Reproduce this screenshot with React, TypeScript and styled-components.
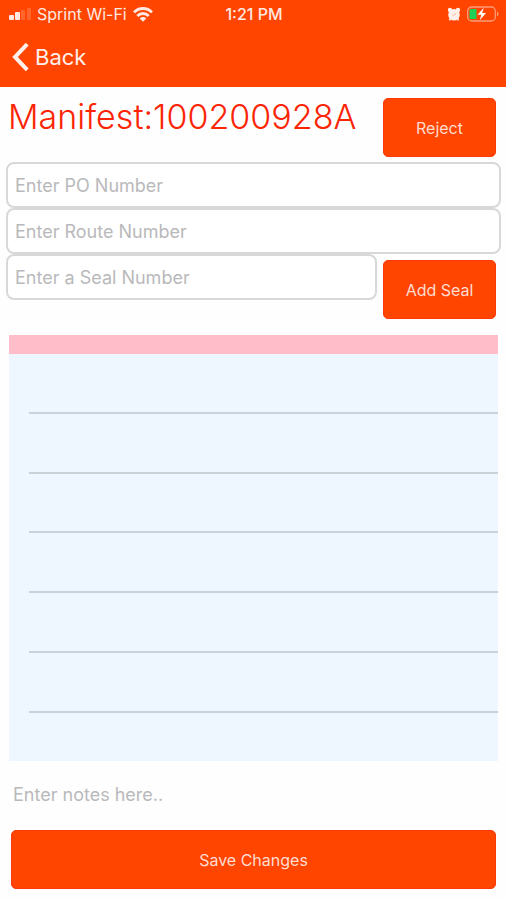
import React from "react";
import styled, { createGlobalStyle } from "styled-components";

const GlobalStyle = createGlobalStyle`
  *, *::before, *::after { box-sizing: border-box; }
  body {
    margin: 0;
    background: #fefefe;
    font-family: Inter, "Liberation Sans", sans-serif;
  }
`;

const Screen = styled.div`
  display: flex;
  flex-direction: column;
  min-height: 100vh;
`;

const Header = styled.header`
  background: #ff4500;
  color: #ffe9e2;
  padding-bottom: 9px;
`;

const StatusBar = styled.div`
  display: grid;
  grid-template-columns: 1fr auto 1fr;
  align-items: center;
  height: 28px;
  padding: 0 7px 0 9px;
  font-size: 16px;
  line-height: 28px;
`;

const StatusGroup = styled.div<{ $end?: boolean }>`
  display: flex;
  align-items: center;
  justify-content: ${(p) => (p.$end ? "flex-end" : "flex-start")};
  gap: 6px;
`;

const Time = styled.time`
  font-size: 16px;
  font-weight: 500;
`;

const BackButton = styled.button`
  display: flex;
  align-items: center;
  gap: 6px;
  height: 50px;
  padding: 8px 12px 0;
  border: 0;
  background: none;
  color: #fff0eb;
  font: 400 22px Inter, "Liberation Sans", sans-serif;
  cursor: pointer;
`;

const Main = styled.main`
  display: flex;
  flex: 1;
  flex-direction: column;
  padding-bottom: 11px;
`;

const TitleRow = styled.div`
  display: flex;
  justify-content: space-between;
  align-items: flex-start;
  gap: 6px;
  padding: 11px 10px 5px 8px;
`;

const Title = styled.h1`
  margin: 0;
  color: #fb2506;
  font-size: 34px;
  font-weight: 300;
  line-height: 38px;
`;

const ActionButton = styled.button<{ $wide?: boolean }>`
  flex: none;
  width: ${(p) => (p.$wide ? "auto" : "113px")};
  height: 59px;
  margin: ${(p) => (p.$wide ? "0 10px 0 11px" : "0")};
  padding: 0;
  border: 1px solid #fb3a08;
  border-radius: 5px;
  background: #ff4500;
  color: #ffdccf;
  font: 400 16px Inter, "Liberation Sans", sans-serif;
  cursor: pointer;
`;

const Fields = styled.div`
  display: flex;
  flex-direction: column;
  padding: 0 5px 0 6px;
`;

const TextField = styled.input`
  flex: 1 0 auto;
  min-width: 0;
  height: 46px;
  padding: 0 7px;
  border: 2px solid #d8d8d8;
  border-radius: 8px;
  background: #fff;
  color: #222;
  font: 400 18px Inter, "Liberation Sans", sans-serif;

  &::placeholder {
    color: #b9b9bb;
    opacity: 1;
  }
`;

const SealRow = styled.div`
  display: flex;
  align-items: flex-start;
  gap: 6px;
  padding: 0 10px 16px 6px;

  ${TextField} {
    flex: 1 1 0;
  }

  ${ActionButton} {
    margin-top: 6px;
  }
`;

const SealList = styled.section`
  display: flex;
  flex: 1;
  flex-direction: column;
  margin: 0 8px 0 9px;
  background: #eef6ff;
`;

const ListHeader = styled.div`
  height: 19px;
  background: #ffbdca;
`;

const Rows = styled.ul`
  display: flex;
  flex: 1;
  flex-direction: column;
  margin: 0;
  padding: 0 0 0 20px;
  list-style: none;
`;

const Row = styled.li`
  flex: 6 0 0;
  border-bottom: 2px solid #c9d2d6;

  &:last-child {
    flex-grow: 5;
    border-bottom: 0;
  }
`;

const Notes = styled.textarea`
  display: block;
  height: 69px;
  padding: 22px 13px;
  border: 0;
  background: transparent;
  color: #222;
  font: 400 18px/24px Inter, "Liberation Sans", sans-serif;
  resize: none;

  &::placeholder {
    color: #b9b9bb;
    opacity: 1;
  }
`;

const SignalIcon = () => (
  <svg width="22" height="12" viewBox="0 0 22 12" fill="#ffe9e2" aria-hidden="true">
    <rect x="0" y="7" width="5" height="5" rx="1" />
    <rect x="6" y="4" width="5" height="8" rx="1" />
    <rect x="12" y="2" width="4" height="10" rx="1" opacity="0.2" />
    <rect x="18" y="0" width="4" height="12" rx="1" opacity="0.2" />
  </svg>
);

const WifiIcon = () => (
  <svg width="20" height="15" viewBox="0 0 20 15" fill="none" stroke="#ffe9e2" strokeWidth="2.8" aria-hidden="true">
    <path d="M1 5.4C6 .2 14 .2 19 5.4" />
    <path d="M4.3 8.9c3.2-3.2 8.200-3.200 11.400 0" />
    <path d="M10 14.800 6.700 11.500c1.900-1.900 4.700-1.900 6.600 0z" fill="#ffe9e2" stroke="none" />
  </svg>
);

const AlarmIcon = () => (
  <svg width="14" height="15" viewBox="0 0 14 15" aria-hidden="true">
    <g fill="#fff0ea">
      <circle cx="3" cy="3" r="2.200" />
      <circle cx="11" cy="3" r="2.200" />
      <circle cx="7" cy="7.800" r="5.800" />
      <path d="M2.500 10.500 1.800 13.200 4 13.500zM11.500 10.500l.7 2.700-2.200.3z" />
    </g>
    <path d="M5.500 7.500 7 8.500l2.200-2.500" fill="none" stroke="#ffb59b" strokeWidth="1" />
  </svg>
);

const BatteryIcon = () => (
  <svg width="32" height="16" viewBox="0 0 32 16" aria-hidden="true">
    <rect x="0.7" y="1" width="27.6" height="14" rx="4" fill="none" stroke="#ff9a78" strokeWidth="1.3" />
    <path d="M30 5.5c2 .8 2 4.2 0 5z" fill="#ff9a78" />
    <path d="M4 3h5.500v10H4a1.500 1.500 0 0 1-1.500-1.500v-7A1.500 1.500 0 0 1 4 3z" fill="#20cf55" />
    <path d="M16.800 1.800 10.500 8.800h3.800L12.800 14.200l6.200-7.200h-3.800z" fill="#fff" />
  </svg>
);

const ChevronIcon = () => (
  <svg width="17" height="30" viewBox="0 0 17 30" fill="none" stroke="#fff0eb" strokeWidth="4" aria-hidden="true">
    <path d="M15.200 2.200 3 15l12.200 12.800" strokeLinejoin="miter" />
  </svg>
);

const SLOTS = [1, 2, 3, 4, 5, 6, 7];

export default function App() {
  return (
    <Screen>
      <GlobalStyle />
      <Header>
        <StatusBar>
          <StatusGroup>
            <SignalIcon />
            <span>Sprint Wi-Fi</span>
            <WifiIcon />
          </StatusGroup>
          <Time>1:21 PM</Time>
          <StatusGroup $end>
            <AlarmIcon />
            <BatteryIcon />
          </StatusGroup>
        </StatusBar>
        <BackButton type="button">
          <ChevronIcon />
          Back
        </BackButton>
      </Header>
      <Main>
        <TitleRow>
          <Title>Manifest:100200928A</Title>
          <ActionButton type="button">Reject</ActionButton>
        </TitleRow>
        <Fields>
          <TextField aria-label="PO number" placeholder="Enter PO Number" />
          <TextField aria-label="Route number" placeholder="Enter Route Number" />
        </Fields>
        <SealRow>
          <TextField aria-label="Seal number" placeholder="Enter a Seal Number" />
          <ActionButton type="button">Add Seal</ActionButton>
        </SealRow>
        <SealList aria-label="Seals">
          <ListHeader />
          <Rows>
            {SLOTS.map((slot) => (
              <Row key={slot} />
            ))}
          </Rows>
        </SealList>
        <Notes aria-label="Notes" placeholder="Enter notes here.." />
        <ActionButton type="button" $wide>
          Save Changes
        </ActionButton>
      </Main>
    </Screen>
  );
}
